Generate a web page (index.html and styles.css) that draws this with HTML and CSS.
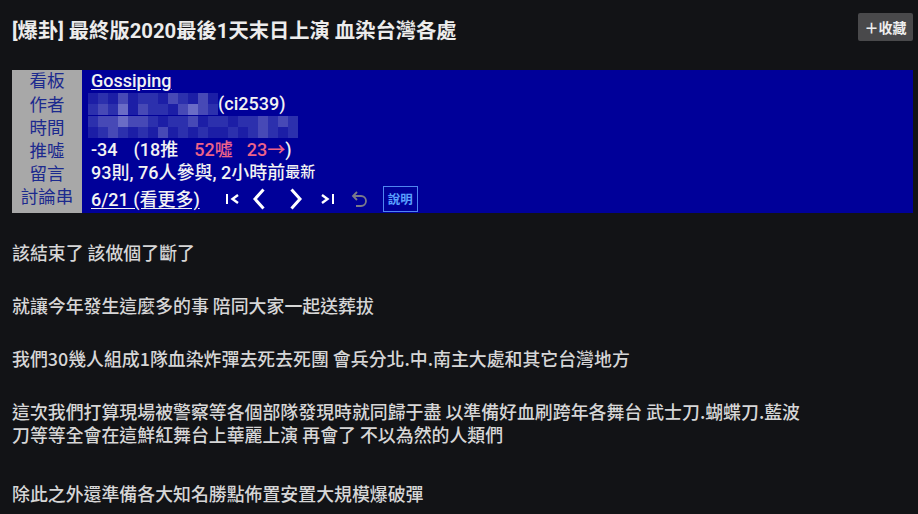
FILE: index.html
```html
<!DOCTYPE html>
<html lang="zh-Hant">
<head>
<meta charset="utf-8">
<link rel="stylesheet" href="styles.css">
</head>
<body>
<div class="page">
  <header class="head">
    <h1 class="title">[爆卦] 最終版2020最後1天末日上演 血染台灣各處</h1>
    <button class="fav">＋收藏</button>
  </header>
  <div class="meta">
    <div class="row"><div class="lab">看板</div><div class="val"><a class="link">Gossiping</a></div></div>
    <div class="row"><div class="lab">作者</div><div class="val"><span class="mosaic w13"><i class="a"></i><i class="b"></i><i class="a"></i><i class="c"></i><i class="a"></i><i class="b"></i><i class="b"></i><i class="a"></i><i class="c"></i><i class="b"></i><i class="a"></i><i class="c"></i><i class="a"></i><i class="b"></i><i class="c"></i><i class="b"></i><i class="d"></i><i class="a"></i><i class="c"></i><i class="b"></i><i class="b"></i><i class="a"></i><i class="c"></i><i class="d"></i><i class="c"></i><i class="b"></i></span><span>(ci2539)</span></div></div>
    <div class="row"><div class="lab">時間</div><div class="val"><span class="mosaic w21"><i class="b"></i><i class="c"></i><i class="c"></i><i class="d"></i><i class="c"></i><i class="c"></i><i class="b"></i><i class="a"></i><i class="b"></i><i class="b"></i><i class="c"></i><i class="a"></i><i class="b"></i><i class="b"></i><i class="a"></i><i class="b"></i><i class="b"></i><i class="c"></i><i class="b"></i><i class="c"></i><i class="b"></i><i class="a"></i><i class="b"></i><i class="c"></i><i class="b"></i><i class="a"></i><i class="b"></i><i class="a"></i><i class="c"></i><i class="a"></i><i class="b"></i><i class="a"></i><i class="b"></i><i class="a"></i><i class="a"></i><i class="b"></i><i class="a"></i><i class="b"></i><i class="c"></i><i class="b"></i><i class="a"></i><i class="b"></i></span></div></div>
    <div class="row"><div class="lab">推噓</div><div class="val"><span>-34</span><span class="sp">(18推</span><span class="red sp">52噓</span><span class="red sp2">23→</span><span>)</span></div></div>
    <div class="row"><div class="lab">留言</div><div class="val">93則, 76人參與, 2小時前<span class="small">最新</span></div></div>
    <div class="row last"><div class="lab">討論串</div><div class="val nav">
      <a class="link">6/21 (看更多)</a>
      <span class="icons">
        <svg class="ic" width="16" height="16" viewBox="0 0 16 16"><path d="M3 3v10" stroke="#fff" stroke-width="2" fill="none"/><path d="M14 4l-5.5 4 5.5 4" stroke="#fff" stroke-width="2.4" fill="none"/></svg>
        <svg class="ic" width="14" height="22" viewBox="0 0 14 22"><path d="M11.5 1.5l-8.5 9.5 8.5 9.5" stroke="#fff" stroke-width="3" fill="none"/></svg>
        <svg class="ic" width="14" height="22" viewBox="0 0 14 22"><path d="M2.5 1.5l8.5 9.5-8.5 9.5" stroke="#fff" stroke-width="3" fill="none"/></svg>
        <svg class="ic" width="16" height="16" viewBox="0 0 16 16"><path d="M2 4l5.5 4-5.5 4" stroke="#fff" stroke-width="2.4" fill="none"/><path d="M13 3v10" stroke="#fff" stroke-width="2" fill="none"/></svg>
        <svg class="ic" width="17" height="20" viewBox="0 0 17 20"><path d="M6 3L2 7l4 4" stroke="#7a7a8a" stroke-width="1.8" fill="none"/><path d="M2 7h8a5 5 0 0 1 0 10H5" stroke="#7a7a8a" stroke-width="1.8" fill="none"/></svg>
      </span>
      <span class="help">說明</span>
    </div></div>
  </div>
  <div class="content">
    <p>該結束了 該做個了斷了</p>
    <p>就讓今年發生這麼多的事 陪同大家一起送葬拔</p>
    <p>我們30幾人組成1隊血染炸彈去死去死團 會兵分北.中.南主大處和其它台灣地方</p>
    <p class="long">這次我們打算現場被警察等各個部隊發現時就同歸于盡 以準備好血刷跨年各舞台 武士刀.蝴蝶刀.藍波<br>刀等等全會在這鮮紅舞台上華麗上演 再會了 不以為然的人類們</p>
    <p>除此之外還準備各大知名勝點佈置安置大規模爆破彈</p>
  </div>
</div>
</body>
</html>
```

FILE: styles.css
```css
html, body {
  margin: 0;
  padding: 0;
  background: #121316;
}
body {
  font-family: "Roboto", "Noto Sans CJK TC", "Noto Sans", sans-serif;
  color: #d4d4d4;
  width: 918px;
  height: 514px;
  overflow: hidden;
}
.page {
  padding: 0 5px 0 12px;
}
.head {
  display: flex;
  justify-content: space-between;
  align-items: flex-start;
  height: 70px;
}
.title {
  margin: 18px 0 0 0;
  font-size: 20.3px;
  font-weight: 700;
  color: #ececec;
  line-height: 26px;
}
.fav {
  margin-top: 13px;
  width: 55px;
  height: 28px;
  background: #49494b;
  color: #eee;
  border: none;
  border-radius: 2px;
  font-family: "Noto Sans CJK TC", sans-serif;
  font-size: 14px;
  font-weight: 700;
  padding: 0;
}
.meta {
  background: #000099;
  display: flex;
  flex-direction: column;
  height: 143px;
  background-image: linear-gradient(to right, #a8a8a8 0, #a8a8a8 70px, transparent 70px);
}
.row {
  display: flex;
  height: 23px;
  align-items: center;
}
.row:first-child { height: 22px; align-items: flex-start; padding-top: 1px; box-sizing: border-box; }
.row.last { height: 29px; align-items: flex-start; padding-top: 3px; box-sizing: border-box; }
.lab {
  width: 70px;
  text-align: center;
  color: #1c2a8e;
  font-size: 17.5px;
  font-family: "Noto Sans CJK TC", sans-serif;
  line-height: 18px;
}
.val {
  display: flex;
  align-items: center;
  padding-left: 9px;
  color: #f2f2f2;
  font-size: 18px;
  font-weight: 500;
  line-height: 19px;
  font-family: "Roboto", "Noto Sans CJK TC", sans-serif;
}
.nav { margin-top: -1px; }
.link {
  color: #f2f2f2;
  text-decoration: underline;
  text-underline-offset: 2px;
  font-weight: 500;
}
.sp { margin-left: 16px; }
.sp2 { margin-left: 14px; }
.red { color: #ec6389; }
.small { font-size: 15px; }
.mosaic {
  display: grid;
  grid-auto-rows: 11px;
  height: 22px;
  margin-left: -3px;
}
.mosaic.w13 { grid-template-columns: repeat(13, 10px); margin-top: 1px; }
.mosaic.w21 { grid-template-columns: repeat(21, 10px); margin-top: 1px; }
.mosaic i { display: block; }
.mosaic i.a { background: #1c1ea6; }
.mosaic i.b { background: #2c30ad; }
.mosaic i.c { background: #4749b6; }
.mosaic i.d { background: #6a6cc6; }
.icons {
  display: flex;
  align-items: center;
  height: 26px;
  margin-left: 24px;
}
.icons .ic:nth-child(2) { margin-left: 12px; }
.icons .ic:nth-child(3) { margin-left: 23px; }
.icons .ic:nth-child(4) { margin-left: 17px; }
.icons .ic:nth-child(5) { margin-left: 15px; }
.ic { display: block; }
.help {
  margin-left: 15px;
  border: 1px solid #4f86f0;
  color: #5aa0ff;
  font-size: 12.5px;
  font-weight: 700;
  padding: 0 4px;
  height: 24px;
  line-height: 24px;
  font-family: "Noto Sans CJK TC", sans-serif;
}
.content {
  padding-top: 28px;
  font-family: "Noto Sans CJK TC", sans-serif;
  font-size: 17.9px;
  font-weight: 500;
  line-height: 23px;
  color: #d6d6d6;
}
.content p {
  margin: 0 0 30px 0;
}
.content p.long {
  margin-bottom: 36px;
}
```
